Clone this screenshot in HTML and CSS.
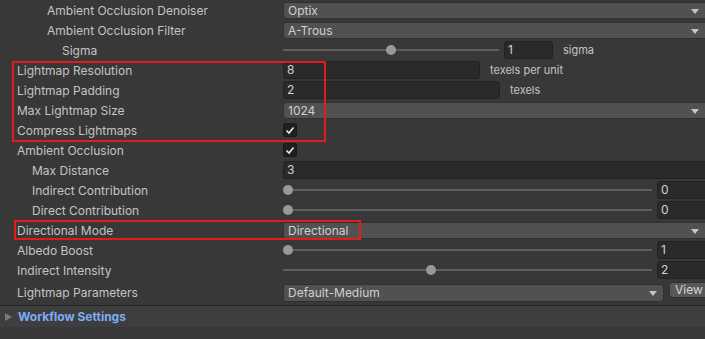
FILE: index.html
```html
<!DOCTYPE html>
<html>
<head>
<meta charset="utf-8">
<link rel="stylesheet" href="styles.css">
</head>
<body>
<div class="panel">
  <div class="row">
    <div class="label ind3">Ambient Occlusion Denoiser</div>
    <div class="field"><div class="dropdown wide">Optix<span class="arrow"></span></div></div>
  </div>
  <div class="row">
    <div class="label ind3">Ambient Occlusion Filter</div>
    <div class="field"><div class="dropdown wide">A-Trous<span class="arrow"></span></div></div>
  </div>
  <div class="row">
    <div class="label ind4">Sigma</div>
    <div class="field">
      <div class="slider sigma"><div class="track"></div><div class="thumb" style="left:103px"></div></div>
      <div class="num sigma-num">1</div>
      <div class="unit">sigma</div>
    </div>
  </div>
  <div class="row">
    <div class="label ind1">Lightmap Resolution</div>
    <div class="field"><div class="num res">8</div><div class="unit">texels per unit</div></div>
  </div>
  <div class="row">
    <div class="label ind1">Lightmap Padding</div>
    <div class="field"><div class="num pad">2</div><div class="unit">texels</div></div>
  </div>
  <div class="row">
    <div class="label ind1">Max Lightmap Size</div>
    <div class="field"><div class="dropdown wide">1024<span class="arrow"></span></div></div>
  </div>
  <div class="row">
    <div class="label ind1">Compress Lightmaps</div>
    <div class="field"><div class="check"><svg width="12" height="12" viewBox="0 0 12 12"><polyline points="2.5,6.5 5,9 9.5,3.5" fill="none" stroke="#e8e8e8" stroke-width="1.6"/></svg></div></div>
  </div>
  <div class="row">
    <div class="label ind1">Ambient Occlusion</div>
    <div class="field"><div class="check"><svg width="12" height="12" viewBox="0 0 12 12"><polyline points="2.5,6.5 5,9 9.5,3.5" fill="none" stroke="#e8e8e8" stroke-width="1.6"/></svg></div></div>
  </div>
  <div class="row">
    <div class="label ind2">Max Distance</div>
    <div class="field"><div class="num full">3</div></div>
  </div>
  <div class="row">
    <div class="label ind2">Indirect Contribution</div>
    <div class="field">
      <div class="slider grow"><div class="track"></div><div class="thumb" style="left:0px"></div></div>
      <div class="num small">0</div>
    </div>
  </div>
  <div class="row">
    <div class="label ind2">Direct Contribution</div>
    <div class="field">
      <div class="slider grow"><div class="track"></div><div class="thumb" style="left:0px"></div></div>
      <div class="num small">0</div>
    </div>
  </div>
  <div class="row">
    <div class="label ind1">Directional Mode</div>
    <div class="field"><div class="dropdown wide">Directional<span class="arrow"></span></div></div>
  </div>
  <div class="row">
    <div class="label ind1">Albedo Boost</div>
    <div class="field">
      <div class="slider grow"><div class="track"></div><div class="thumb" style="left:0px"></div></div>
      <div class="num small">1</div>
    </div>
  </div>
  <div class="row">
    <div class="label ind1">Indirect Intensity</div>
    <div class="field">
      <div class="slider grow"><div class="track"></div><div class="thumb" style="left:143px"></div></div>
      <div class="num small">2</div>
    </div>
  </div>
  <div class="row tall">
    <div class="label ind1">Lightmap Parameters</div>
    <div class="field">
      <div class="dropdown params">Default-Medium<span class="arrow"></span></div>
      <div class="btn">View</div>
    </div>
  </div>
  <div class="foldout">
    <span class="tri"></span>
    <span class="fold-title">Workflow Settings</span>
  </div>
  <div class="mark mark1"></div>
  <div class="mark mark2"></div>
</div>
</body>
</html>
```

FILE: styles.css
```css
html, body {
  margin: 0;
  padding: 0;
  background: #383838;
  overflow: hidden;
}
.panel {
  position: relative;
  width: 705px;
  height: 339px;
  overflow: hidden;
  font-family: Inter, "Noto Sans", sans-serif;
  font-size: 12px;
  color: #c4c4c4;
}
.row {
  display: flex;
  align-items: center;
  height: 20px;
}
.row.tall {
  height: 25px;
  padding-top: 2px;
  padding-bottom: 2px;
  box-sizing: border-box;
}
.label {
  width: 283px;
  flex: none;
  box-sizing: border-box;
  white-space: nowrap;
}
.ind1 { padding-left: 17px; }
.ind2 { padding-left: 32px; }
.ind3 { padding-left: 47px; }
.ind4 { padding-left: 62px; }
.field {
  flex: 1;
  display: flex;
  align-items: center;
  height: 100%;
  min-width: 0;
}
.dropdown {
  position: relative;
  height: 17px;
  box-sizing: border-box;
  background: #515151;
  border: 1px solid #303030;
  border-radius: 3px;
  padding-left: 4px;
  line-height: 15px;
  color: #d0d0d0;
}
.dropdown.wide {
  flex: 1;
  margin-right: -4px;
}
.dropdown.params {
  flex: 1;
  height: 18px;
  line-height: 16px;
}
.arrow {
  position: absolute;
  top: 6px;
  right: 9px;
  width: 0;
  height: 0;
  border-left: 4px solid transparent;
  border-right: 4px solid transparent;
  border-top: 5px solid #c4c4c4;
}
.dropdown.params .arrow { right: 6px; top: 6px; }
.btn {
  flex: none;
  width: 40px;
  margin-left: 5px;
  margin-right: -4px;
  height: 16px;
  box-sizing: border-box;
  background: #585858;
  border: 1px solid #303030;
  border-radius: 3px;
  padding-left: 5px;
  line-height: 14px;
  color: #d6d6d6;
  align-self: flex-start;
}
.num {
  height: 18px;
  box-sizing: border-box;
  background: #2a2a2a;
  border: 1px solid #212121;
  border-radius: 3px;
  padding-left: 3px;
  line-height: 16px;
  color: #d2d2d2;
  flex: none;
}
.num.res { width: 197px; }
.num.pad { width: 217px; }
.num.full { flex: 1; margin-right: -4px; }
.num.small { width: 52px; margin-left: 5px; margin-right: -4px; }
.num.sigma-num { width: 49px; margin-left: 5px; }
.unit {
  margin-left: 10px;
  font-size: 11px;
  color: #c4c4c4;
  white-space: nowrap;
}
.slider {
  position: relative;
  height: 12px;
}
.slider.sigma { width: 216px; flex: none; }
.slider.grow { flex: 1; }
.track {
  position: absolute;
  left: 0;
  right: 0;
  top: 5px;
  height: 2px;
  background: #5e5e5e;
}
.thumb {
  position: absolute;
  top: 1px;
  width: 10px;
  height: 10px;
  border-radius: 50%;
  background: #999999;
}
.check {
  width: 14px;
  height: 14px;
  box-sizing: border-box;
  background: #202020;
  border: 1px solid #1a1a1a;
  border-radius: 2px;
  display: flex;
}
.check svg { display: block; }
.foldout {
  border-top: 1px solid #232323;
  background: #3e3e3e;
  height: 21px;
  display: flex;
  align-items: center;
}
.tri {
  width: 0;
  height: 0;
  margin-left: 5px;
  border-top: 4px solid transparent;
  border-bottom: 4px solid transparent;
  border-left: 7px solid #7a7a7a;
}
.fold-title {
  margin-left: 6px;
  color: #7badf7;
  font-weight: 700;
  font-size: 12px;
}
.mark {
  position: absolute;
  border: 2px solid #e31b1b;
  box-sizing: border-box;
}
.mark1 { left: 12px; top: 61px; width: 314px; height: 81px; }
.mark2 { left: 14px; top: 220px; width: 347px; height: 20px; }
```
